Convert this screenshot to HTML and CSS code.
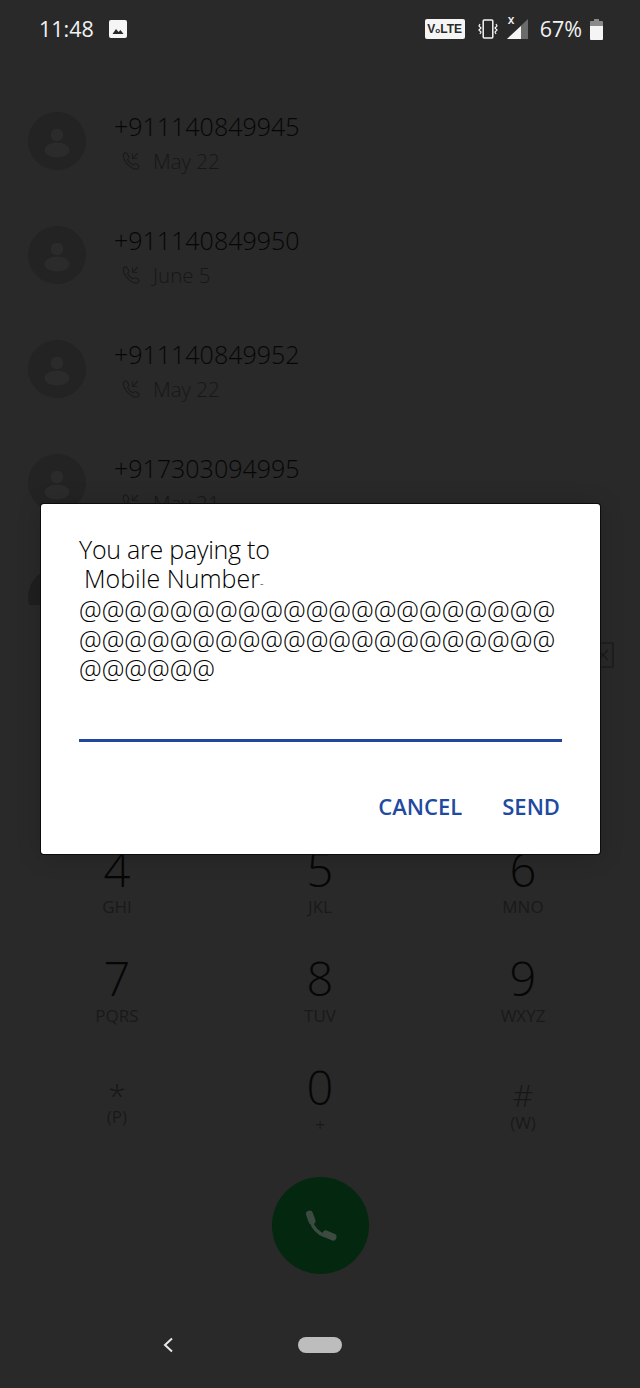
FILE: index.html
```html
<!DOCTYPE html>
<html lang="en">
<head>
<meta charset="utf-8">
<title>Dialer</title>
<link rel="stylesheet" href="styles.css">
</head>
<body>
<div class="screen">
  <header class="status">
    <div class="status-left">
      <span class="time">11:48</span>
      <svg class="ic-pic" viewBox="0 0 18 18"><rect width="18" height="18" rx="2" fill="#f5f5f5"/><path d="M3.5 14l3.5-5 2.5 3 2-2 3 4z" fill="#292929"/></svg>
    </div>
    <div class="status-right">
      <span class="volte">V<i class="volte-o">o</i>LTE</span>
      <svg class="ic-vib" viewBox="0 0 20 20"><rect x="5.2" y="1" width="9.6" height="18" rx="1" fill="none" stroke="#f5f5f5" stroke-width="1.5"/><path d="M2 5l-1 2 2 2-2 2 2 2-1 2M18 5l1 2-2 2 2 2-2 2 1 2" fill="none" stroke="#f5f5f5" stroke-width="1.2"/></svg>
      <span class="signal">
        <span class="signal-x">x</span>
        <svg class="ic-signal" viewBox="0 0 21 20"><path d="M21 0v20H0z" fill="#6b6b6b"/><path d="M14 7v13H0z" fill="#f5f5f5"/></svg>
      </span>
      <span class="pct">67%</span>
      <svg class="ic-batt" viewBox="0 0 13 21"><path d="M4 0h5v2h3a1 1 0 0 1 1 1v4H0V3a1 1 0 0 1 1-1h3z" fill="#8a8a8a"/><path d="M0 7h13v13a1 1 0 0 1-1 1H1a1 1 0 0 1-1-1z" fill="#f5f5f5"/></svg>
    </div>
  </header>

  <main class="recents">
    <div class="row">
      <svg class="avatar" viewBox="0 0 58 58"><circle cx="29" cy="29" r="29" fill="#232323"/><rect x="23" y="17" width="12" height="12" rx="5" fill="#2b2b2b"/><ellipse cx="29" cy="38" rx="12.5" ry="7.5" fill="#2b2b2b"/></svg>
      <div class="row-text">
        <div class="number">+911140849945</div>
        <div class="meta"><svg class="ic-call" viewBox="0 0 20 20"><path d="M2.5 3.5c1-2 3-2 3.5-1l2 3.500c.3.700-1 2-1.500 2.500 1 2.500 3 4.500 5.500 5.500.5-.5 1.800-1.800 2.500-1.500l3 2c1 .7.500 2.500-1 3.500-6 1-15-8-14-14.500zM17 2l-5 5M11.500 2.500V7.500H16.500" fill="none" stroke="#1b1b1b" stroke-width="1.100"/></svg><span class="date">May 22</span></div>
      </div>
    </div>
    <div class="row">
      <svg class="avatar" viewBox="0 0 58 58"><circle cx="29" cy="29" r="29" fill="#232323"/><rect x="23" y="17" width="12" height="12" rx="5" fill="#2b2b2b"/><ellipse cx="29" cy="38" rx="12.5" ry="7.5" fill="#2b2b2b"/></svg>
      <div class="row-text">
        <div class="number">+911140849950</div>
        <div class="meta"><svg class="ic-call" viewBox="0 0 20 20"><path d="M2.5 3.5c1-2 3-2 3.5-1l2 3.500c.3.700-1 2-1.500 2.500 1 2.500 3 4.500 5.500 5.500.5-.5 1.800-1.800 2.500-1.500l3 2c1 .7.500 2.500-1 3.500-6 1-15-8-14-14.500zM17 2l-5 5M11.500 2.500V7.500H16.500" fill="none" stroke="#1b1b1b" stroke-width="1.100"/></svg><span class="date">June 5</span></div>
      </div>
    </div>
    <div class="row">
      <svg class="avatar" viewBox="0 0 58 58"><circle cx="29" cy="29" r="29" fill="#232323"/><rect x="23" y="17" width="12" height="12" rx="5" fill="#2b2b2b"/><ellipse cx="29" cy="38" rx="12.5" ry="7.5" fill="#2b2b2b"/></svg>
      <div class="row-text">
        <div class="number">+911140849952</div>
        <div class="meta"><svg class="ic-call" viewBox="0 0 20 20"><path d="M2.5 3.5c1-2 3-2 3.5-1l2 3.500c.3.700-1 2-1.500 2.500 1 2.500 3 4.500 5.500 5.500.5-.5 1.800-1.800 2.500-1.500l3 2c1 .7.500 2.500-1 3.500-6 1-15-8-14-14.500zM17 2l-5 5M11.500 2.500V7.500H16.500" fill="none" stroke="#1b1b1b" stroke-width="1.100"/></svg><span class="date">May 22</span></div>
      </div>
    </div>
    <div class="row">
      <svg class="avatar" viewBox="0 0 58 58"><circle cx="29" cy="29" r="29" fill="#232323"/><rect x="23" y="17" width="12" height="12" rx="5" fill="#2b2b2b"/><ellipse cx="29" cy="38" rx="12.5" ry="7.5" fill="#2b2b2b"/></svg>
      <div class="row-text">
        <div class="number">+917303094995</div>
        <div class="meta"><svg class="ic-call" viewBox="0 0 20 20"><path d="M2.5 3.5c1-2 3-2 3.5-1l2 3.500c.3.700-1 2-1.500 2.500 1 2.500 3 4.500 5.500 5.500.5-.5 1.800-1.800 2.500-1.500l3 2c1 .7.500 2.500-1 3.500-6 1-15-8-14-14.500zM17 2l-5 5M11.500 2.500V7.500H16.500" fill="none" stroke="#1b1b1b" stroke-width="1.100"/></svg><span class="date">May 21</span></div>
      </div>
    </div>
    <div class="row">
      <svg class="avatar" viewBox="0 0 58 58"><circle cx="29" cy="29" r="29" fill="#1f1f1f"/></svg>
    </div>
  </main>

  <section class="panel">
    <div class="field">
      <svg class="ic-del" viewBox="0 0 36 26"><path d="M9 1h26v24H9L1 13z" fill="none" stroke="#1c1c1c" stroke-width="1.6"/><path d="M20 8l10 10M30 8L20 18" stroke="#1c1c1c" stroke-width="1.6"/></svg>
    </div>
    <div class="keypad">
      <div class="key"><span class="digit">4</span><span class="letters">GHI</span></div>
      <div class="key"><span class="digit">5</span><span class="letters">JKL</span></div>
      <div class="key"><span class="digit">6</span><span class="letters">MNO</span></div>
      <div class="key"><span class="digit">7</span><span class="letters">PQRS</span></div>
      <div class="key"><span class="digit">8</span><span class="letters">TUV</span></div>
      <div class="key"><span class="digit">9</span><span class="letters">WXYZ</span></div>
      <div class="key"><span class="digit sym">*</span><span class="letters paren">(P)</span></div>
      <div class="key"><span class="digit">0</span><span class="letters">+</span></div>
      <div class="key"><span class="digit sym">#</span><span class="letters paren-w">(W)</span></div>
    </div>
    <div class="call-wrap">
      <button class="call" type="button">
        <svg class="ic-phone" viewBox="0 0 36 36"><path d="M9 13c2 7 7 12 14 15" fill="none" stroke="#3c4a41" stroke-width="3.4"/><path d="M7.5 6l2.5 7M24 26l7 3" fill="none" stroke="#3c4a41" stroke-width="7" stroke-linecap="round"/></svg>
      </button>
    </div>
    <nav class="nav">
      <svg class="ic-back" viewBox="0 0 12 16"><path d="M10 1.500L3 8l7 6.500" fill="none" stroke="#e8e8e8" stroke-width="2"/></svg>
      <span class="pill"></span>
    </nav>
  </section>

  <div class="dialog">
    <div class="msg">
      <div class="line-a">You are paying to</div>
      <div class="line-b">Mobile Number<span class="tick">-</span></div>
      <div class="ats">@@@@@@@@@@@@@@@@@@@@@@@@@@@@@@@@@@@@@@@@@@@@@@@@</div>
    </div>
    <div class="input"></div>
    <div class="actions">
      <button class="btn" type="button">CANCEL</button>
      <button class="btn" type="button">SEND</button>
    </div>
  </div>
</div>
</body>
</html>
```
FILE: styles.css
```css
* { box-sizing: border-box; }
html, body { margin: 0; padding: 0; background: #292929; }
body { font-family: "Open Sans", "Liberation Sans", sans-serif; }

.screen {
  position: relative;
  width: 640px;
  height: 1388px;
  overflow: hidden;
  background: #292929;
  display: flex;
  flex-direction: column;
}

/* status bar */
.status {
  height: 58px;
  flex: none;
  padding: 0 37px 0 39px;
  display: flex;
  justify-content: space-between;
  align-items: center;
  color: #f2f2f2;
}
.status-left { display: flex; align-items: center; gap: 15px; }
.time { font-size: 21.5px; line-height: 58px; }
.ic-pic { width: 18px; height: 18px; }
.status-right { display: flex; align-items: center; }
.volte {
  width: 40px;
  height: 20px;
  background: #f5f5f5;
  border-radius: 2px;
  color: #292929;
  font-size: 12px;
  font-weight: 700;
  line-height: 20px;
  text-align: center;
  white-space: nowrap;
  font-family: "Liberation Sans", sans-serif;
}
.volte-o { font-style: normal; font-size: 8px; }
.ic-vib { width: 20px; height: 20px; margin-left: 13px; }
.signal { position: relative; width: 21px; height: 20px; margin-left: 9px; }
.ic-signal { width: 21px; height: 20px; display: block; }
.signal-x {
  position: absolute;
  left: 1px;
  top: -6px;
  font-size: 12px;
  font-weight: 600;
  line-height: 14px;
}
.pct { font-size: 21.5px; margin-left: 12px; line-height: 58px; }
.ic-batt { width: 13px; height: 21px; margin-left: 8px; }

/* recent calls */
.recents {
  flex: none;
  height: 547px;
  overflow: hidden;
  padding-top: 26px;
}
.row {
  height: 114px;
  padding: 28px 0 0 28px;
  display: flex;
  gap: 28px;
  align-items: flex-start;
}
.avatar { width: 58px; height: 58px; flex: none; }
.row-text { margin-top: -1px; }
.number {
  font-size: 25px;
  font-weight: 300;
  line-height: 30px;
  color: #060606;
}
.meta { display: flex; align-items: center; gap: 12px; margin: 5px 0 0 7px; }
.ic-call { width: 20px; height: 20px; }
.date { font-size: 20.5px; font-weight: 300; line-height: 30px; color: #171717; }

/* dial panel */
.panel { flex: 1; display: flex; flex-direction: column; background: #292929; }
.field {
  height: 227px;
  flex: none;
  padding: 37px 26px 0 0;
  display: flex;
  justify-content: flex-end;
  align-items: flex-start;
}
.ic-del { width: 36px; height: 26px; }
.keypad { display: grid; grid-template-columns: 203px 203px 203px; justify-content: start; padding-left: 15.5px; }
.key {
  height: 109px;
  padding-top: 15px;
  display: flex;
  flex-direction: column;
  align-items: center;
}
.digit {
  font-size: 47px;
  font-weight: 300;
  line-height: 44px;
  color: #060606;
}
.digit.sym { font-size: 32px; margin-top: 8px; color: #171717; }
.letters {
  font-size: 17px;
  line-height: 20px;
  margin-top: 6px;
  color: #191919;
}
.letters.paren { margin-top: -10px; }
.letters.paren-w { margin-top: -4px; }

.call-wrap { display: flex; justify-content: center; padding-top: 18px; }
.call {
  width: 97px;
  height: 97px;
  border: 0;
  padding: 0;
  border-radius: 50%;
  background: #03270f;
  display: flex;
  align-items: center;
  justify-content: center;
}
.ic-phone { width: 36px; height: 36px; }

.nav {
  position: relative;
  flex: 1;
  display: flex;
  justify-content: center;
  padding-top: 63px;
}
.pill { width: 44px; height: 16px; border-radius: 8px; background: #bdbdbd; }
.ic-back { position: absolute; left: 162px; top: 63px; width: 12px; height: 16px; }

/* dialog */
.dialog {
  position: absolute;
  left: 41px;
  top: 504px;
  width: 559px;
  height: 350px;
  background: #fff;
  border-radius: 3px;
  box-shadow: 0 0 0 1px #0c0c0c, 0 2px 24px rgba(0, 0, 0, .18);
  padding: 31px 38px 0;
  color: #000;
}
.msg {
  font-size: 25px;
  font-weight: 300;
  line-height: 29.5px;
}
.line-a { letter-spacing: -.25px; }
.line-b { padding-left: 5px; margin-top: -1px; }
.ats {
  font-size: 25.6px;
  word-break: break-all;
  margin-top: -3px;
}
.tick { font-size: 11px; }
.input { height: 3px; margin-top: 55px; background: #1f479e; }
.actions { display: flex; justify-content: flex-end; gap: 40px; padding: 50px 2px 0 0; }
.btn {
  border: 0;
  background: none;
  padding: 0;
  font-family: "Open Sans", "Liberation Sans", sans-serif;
  font-size: 22px;
  font-weight: 600;
  line-height: 28px;
  color: #1f4a9f;
}
```
